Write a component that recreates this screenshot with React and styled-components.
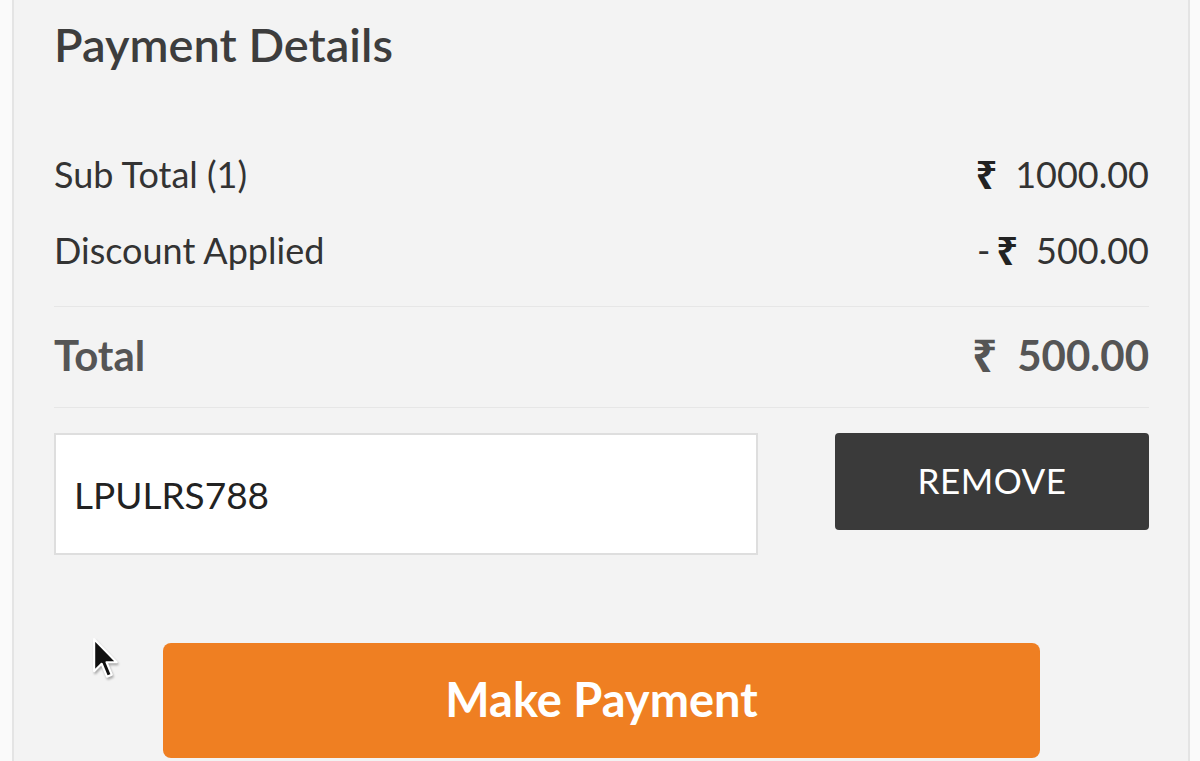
import React from "react";
import styled, { createGlobalStyle } from "styled-components";

const GlobalStyle = createGlobalStyle`
  html, body {
    margin: 0;
    padding: 0;
    background: #fafafa;
    font-family: Lato, "Open Sans", "Noto Sans", sans-serif;
    overflow: hidden;
  }
`;

const Page = styled.div`
  position: relative;
  width: 1200px;
  height: 761px;
  overflow: hidden;
`;

const Panel = styled.div`
  margin-left: 12px;
  width: 1178px;
  box-sizing: border-box;
  min-height: 800px;
  background: #f3f3f3;
  border-left: 2px solid #e4e4e4;
  border-right: 2px solid #e4e4e4;
  padding: 14px 39px 0 40px;
`;

const Title = styled.h2`
  margin: 0;
  font-size: 47px;
  line-height: 60px;
  font-weight: 600;
  color: #3d3d3d;
`;

const Rows = styled.div`
  margin-top: 62px;
`;

const Row = styled.div`
  display: flex;
  justify-content: space-between;
  align-items: center;
  height: ${(p) => (p.$total ? "96px" : "76px")};
  font-size: ${(p) => (p.$total ? "42px" : "36px")};
  font-weight: ${(p) => (p.$total ? 700 : 400)};
  color: ${(p) => (p.$total ? "#555" : "#333")};
`;

const Amount = styled.span`
  display: flex;
  align-items: center;
`;

const Rupee = styled.span`
  font-family: "Noto Sans", "DejaVu Sans", sans-serif;
  font-weight: 700;
  margin: 0 ${(p) => (p.$total ? "20px" : "18px")} 0 ${(p) => (p.$minus ? "6px" : "0")};
  font-size: ${(p) => (p.$total ? "44px" : "38px")};
  color: ${(p) => (p.$total ? "#555" : "#222")};
`;

const Divider = styled.hr`
  margin: ${(p) => p.$m || "0"};
  border: 0;
  border-top: 1px solid #e6e6e6;
`;

const CouponRow = styled.div`
  display: flex;
  justify-content: space-between;
  align-items: flex-start;
  margin-top: 25px;
`;

const CouponInput = styled.input`
  box-sizing: border-box;
  width: 704px;
  height: 122px;
  background: #fff;
  border: 2px solid #dedede;
  padding: 0 18px;
  font-family: inherit;
  font-size: 37px;
  color: #222;
  outline: none;
`;

const RemoveButton = styled.button`
  width: 314px;
  height: 97px;
  padding: 0 0 4px;
  border: 0;
  border-radius: 4px;
  background: #3a3a3a;
  color: #fff;
  font-family: inherit;
  font-size: 35px;
  font-weight: 400;
  letter-spacing: 0.5px;
  cursor: pointer;
`;

const PayButton = styled.button`
  display: block;
  width: 877px;
  height: 115px;
  margin: 88px auto 0;
  padding: 0 0 4px;
  border: 0;
  border-radius: 8px;
  background: #ef7f22;
  color: #fff;
  font-family: inherit;
  font-size: 47px;
  font-weight: 700;
  cursor: pointer;
`;

const Cursor = styled.svg`
  position: absolute;
  left: 92px;
  top: 637px;
  pointer-events: none;
  filter: drop-shadow(1px 2px 1px rgba(0, 0, 0, 0.3));
`;

const lines = [
  { label: "Sub Total (1)", value: "1000.00" },
  { label: "Discount Applied", value: "500.00", minus: true },
];

const App = () => {
  return (
    <>
      <GlobalStyle />
      <Page>
        <Panel>
          <Title>Payment Details</Title>
          <Rows>
            {lines.map((l) => (
              <Row key={l.label}>
                <span>{l.label}</span>
                <Amount>
                  {l.minus && "-"}
                  <Rupee $minus={l.minus}>₹</Rupee>
                  {l.value}
                </Amount>
              </Row>
            ))}
          </Rows>
          <Divider $m="18px 0 0" />
          <Row $total>
            <span>Total</span>
            <Amount>
              <Rupee $total>₹</Rupee>
              500.00
            </Amount>
          </Row>
          <Divider $m="4px 0 0" />
          <CouponRow>
            <CouponInput defaultValue="LPULRS788" />
            <RemoveButton>REMOVE</RemoveButton>
          </CouponRow>
          <PayButton>Make Payment</PayButton>
        </Panel>
        <Cursor width="30" height="45" viewBox="0 0 14 21">
          <path
            d="M1 1 L1 16 L4.5 12.5 L7 18.5 L9.2 17.6 L6.8 11.8 L11.5 11.8 Z"
            fill="#111"
            stroke="#fff"
            strokeWidth="1"
            strokeLinejoin="round"
          />
        </Cursor>
      </Page>
    </>
  );
};

export default App;
